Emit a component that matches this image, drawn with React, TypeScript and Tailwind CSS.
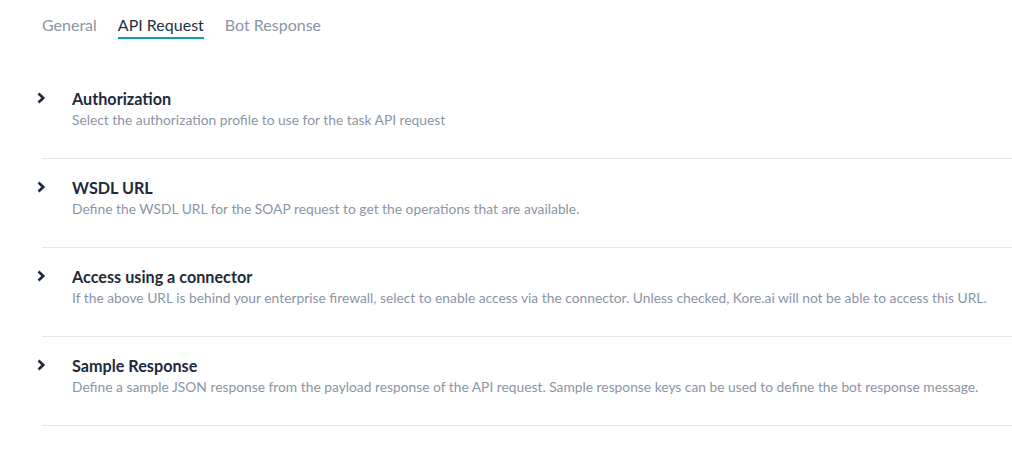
const items = [
  {
    title: "Authorization",
    desc: "Select the authorization profile to use for the task API request",
  },
  {
    title: "WSDL URL",
    desc: "Define the WSDL URL for the SOAP request to get the operations that are available.",
  },
  {
    title: "Access using a connector",
    desc: "If the above URL is behind your enterprise firewall, select to enable access via the connector. Unless checked, Kore.ai will not be able to access this URL.",
  },
  {
    title: "Sample Response",
    desc: "Define a sample JSON response from the payload response of the API request. Sample response keys can be used to define the bot response message.",
  },
]

const tabs = ["General", "API Request", "Bot Response"]

function Chevron() {
  return (
    <svg width="10" height="12" viewBox="0 0 10 12" className="mt-[3px] shrink-0">
      <polyline points="2.5,1.6 7.2,6 2.5,10.4" fill="none" stroke="#1f2a3b" strokeWidth="2.7" />
    </svg>
  )
}

export default function App() {
  return (
    <div className="w-full min-h-screen bg-white font-['Lato',sans-serif]">
      <div className="flex gap-[21px] pl-[42px]">
        {tabs.map(t => (
          <div
            key={t}
            className={
              t === "API Request"
                ? "pt-[15px] pb-[2px] text-[16px] leading-[20px] text-[#243044] border-b-[2px] border-[#0a9ea7]"
                : "pt-[15px] pb-[2px] text-[16px] leading-[20px] text-[#8b95a5] border-b-[2px] border-transparent"
            }
          >
            {t}
          </div>
        ))}
      </div>
      <div className="mt-[31px] ml-[42px]">
        {items.map(it => (
          <div key={it.title} className="border-b border-[#e6e8ec] pt-[19px] pb-[29px]">
            <div className="flex -ml-[6px]">
              <Chevron />
              <div className="ml-[26px]">
                <div className="text-[16.2px] leading-[20px] font-bold text-[#1f2a3b]">{it.title}</div>
                <div className="mt-[2px] text-[13.8px] leading-[18px] text-[#8b95a5]">{it.desc}</div>
              </div>
            </div>
          </div>
        ))}
      </div>
    </div>
  )
}
